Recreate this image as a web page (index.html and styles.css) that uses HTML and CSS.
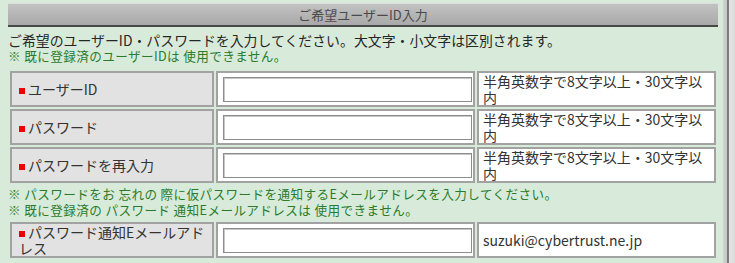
FILE: index.html
```html
<!DOCTYPE html>
<html lang="ja">
<head>
  <meta charset="UTF-8" />
  <meta name="viewport" content="width=device-width, initial-scale=1.0" />
  <title>ご希望ユーザーID入力</title>
  <link rel="stylesheet" href="styles.css">
</head>
<body>
  <div class="page">
    <div class="section-title">ご希望ユーザーID入力</div>

    <p class="lead">ご希望のユーザーID・パスワードを入力してください。大文字・小文字は区別されます。</p>
    <p class="notice">※ 既に登録済のユーザーIDは 使用できません。</p>

    <div class="form-grid">
      <div class="label"><span><span class="req"></span>ユーザーID</span></div>
      <div class="field"><input type="text" name="userid"></div>
      <div class="note">半角英数字で8文字以上・30文字以内</div>

      <div class="label"><span><span class="req"></span>パスワード</span></div>
      <div class="field"><input type="password" name="password"></div>
      <div class="note">半角英数字で8文字以上・30文字以内</div>

      <div class="label"><span><span class="req"></span>パスワードを再入力</span></div>
      <div class="field"><input type="password" name="password2"></div>
      <div class="note">半角英数字で8文字以上・30文字以内</div>
    </div>

    <div class="notes-block">
      <p class="notice">※ パスワードをお 忘れの 際に仮パスワードを通知するEメールアドレスを入力してください。</p>
      <p class="notice">※ 既に登録済の パスワード 通知Eメールアドレスは 使用できません。</p>
    </div>

    <div class="form-grid">
      <div class="label"><span><span class="req"></span>パスワード通知Eメールアドレス</span></div>
      <div class="field"><input type="text" name="mail"></div>
      <div class="note">suzuki@cybertrust.ne.jp</div>
    </div>
  </div>
  <div class="frame-edge"></div>
</body>
</html>
```

FILE: styles.css
```css
body {
  margin: 0;
  height: 263px;
  overflow: hidden;
  display: flex;
  background: #d8ebdb;
  font-family: "Noto Sans CJK JP", "Noto Sans", sans-serif;
  color: #2a2a2a;
}
.page {
  flex: 1;
  padding: 3px 5px 0 8px;
}
.frame-edge {
  width: 12px;
  background: linear-gradient(to right, #d4d4d4 0, #c4c4c4 4px, #7c7c7c 4px, #7c7c7c 6px, #e4e4e4 6px, #dcdcdc 12px);
}
.section-title {
  height: 21px;
  line-height: 21px;
  border-top: 1px solid #dcdcdc;
  border-bottom: 2px solid #484848;
  background: linear-gradient(#c2c2c2, #a9a9a9);
  text-align: center;
  font-size: 13px;
  color: #4a4a4a;
}
p {
  margin: 0;
}
.lead {
  margin-top: 5px;
  font-size: 13.9px;
  line-height: 16px;
  color: #262626;
}
.notice {
  font-size: 12.6px;
  line-height: 16px;
  letter-spacing: 0.4px;
  color: #2b7b2b;
}
.form-grid {
  display: grid;
  grid-template-columns: 204px 259px 239px;
  gap: 2px;
  padding: 2px;
  margin-top: 5px;
}
.notes-block {
  margin: 1px 0 2px;
}
.notes-block + .form-grid {
  margin-top: 0;
}
.label,
.field,
.note {
  border: 2px solid #a2a2a2;
  font-size: 14px;
  line-height: 16px;
}
.label {
  background: #e2e2e2;
  padding: 0 4px 0 7px;
  display: flex;
  align-items: center;
  color: #333;
  min-height: 32px;
}
.req {
  display: inline-block;
  width: 6px;
  height: 6px;
  background: #ee0000;
  margin-right: 3px;
  vertical-align: 1px;
}
.field {
  background: #fff;
  display: flex;
  align-items: center;
}
.field input {
  box-sizing: border-box;
  width: 249px;
  height: 25px;
  margin: 0 0 0 5px;
  padding: 2px 4px;
  border: 1px solid #8c8c8c;
  box-shadow: inset 1px 1px 0 #c8c8c8;
  background: #fff;
  font: inherit;
}
.note {
  background: #fff;
  padding: 0 4px;
  display: flex;
  align-items: center;
  color: #333;
}
```
